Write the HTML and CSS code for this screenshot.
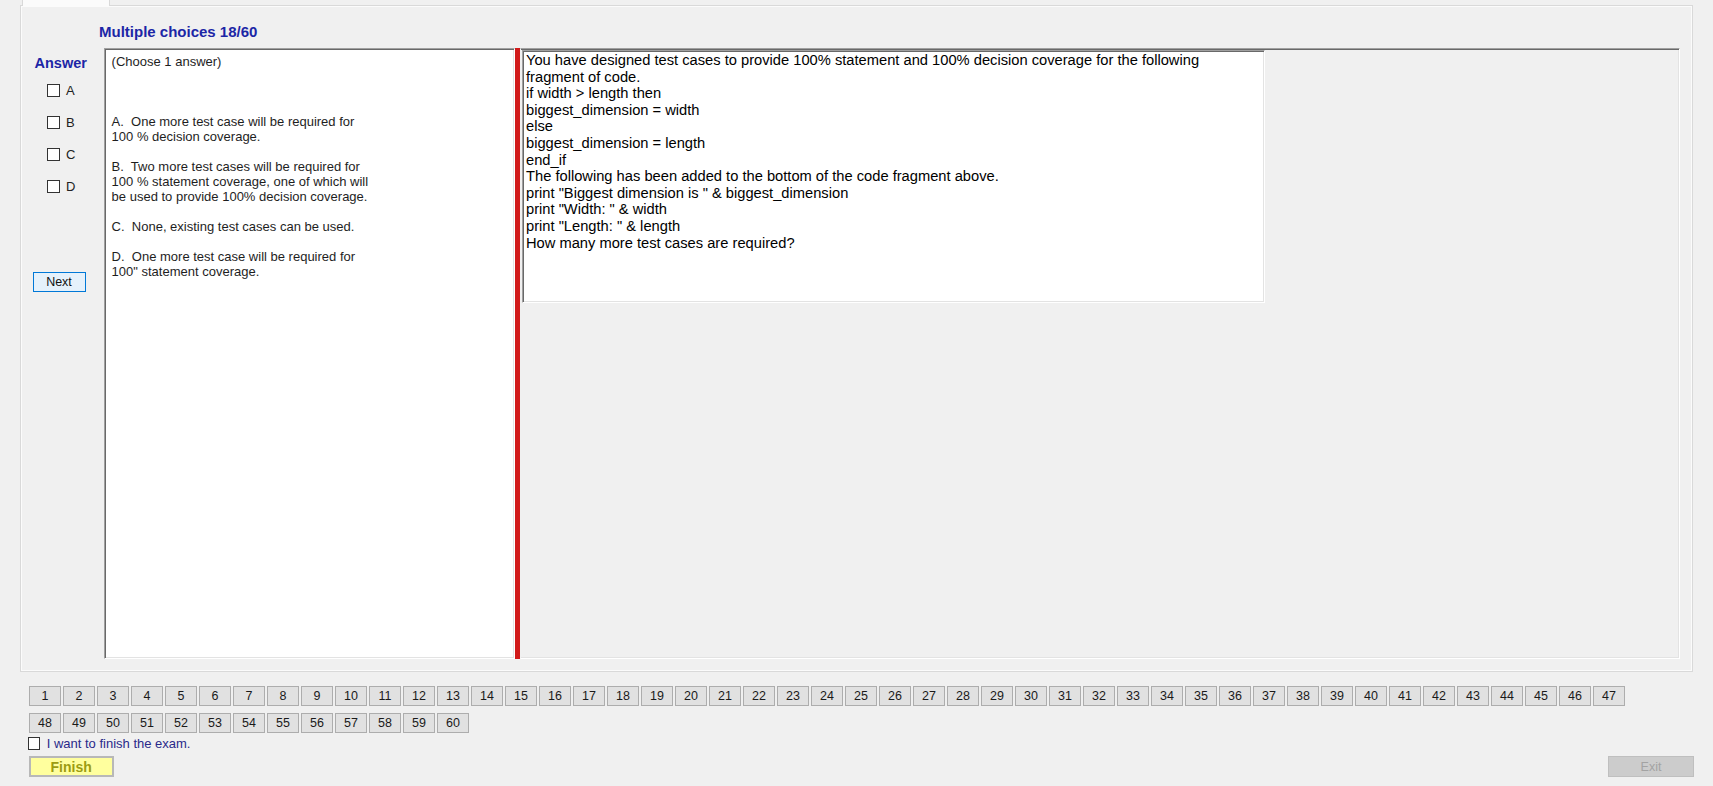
FILE: index.html
```html
<!DOCTYPE html>
<html lang="en">
<head>
<meta charset="utf-8">
<title>Exam</title>
<link rel="stylesheet" href="styles.css">
</head>
<body>
<div class="tabstrip"><div class="tab"></div></div>
<div class="page">
  <div class="title">Multiple choices 18/60</div>
  <div class="main">
    <div class="answers">
      <div class="answer-label">Answer</div>
      <div class="opts">
        <label class="opt"><span class="box"></span>A</label>
        <label class="opt"><span class="box"></span>B</label>
        <label class="opt"><span class="box"></span>C</label>
        <label class="opt"><span class="box"></span>D</label>
      </div>
      <button class="next">Next</button>
    </div>
    <div class="split">
      <div class="pane-left">(Choose 1 answer)



A.  One more test case will be required for
100 % decision coverage.

B.  Two more test cases will be required for
100 % statement coverage, one of which will
be used to provide 100% decision coverage.

C.  None, existing test cases can be used.

D.  One more test case will be required for
100" statement coverage.</div>
      <div class="splitter"></div>
      <div class="pane-right">
        <div class="qbox">You have designed test cases to provide 100% statement and 100% decision coverage for the following
fragment of code.
if width &gt; length then
biggest_dimension = width
else
biggest_dimension = length
end_if
The following has been added to the bottom of the code fragment above.
print "Biggest dimension is " &amp; biggest_dimension
print "Width: " &amp; width
print "Length: " &amp; length
How many more test cases are required?</div>
      </div>
    </div>
  </div>
</div>
<div class="nav">
  <button class="nb">1</button><button class="nb">2</button><button class="nb">3</button><button class="nb">4</button><button class="nb">5</button><button class="nb">6</button><button class="nb">7</button><button class="nb">8</button><button class="nb">9</button><button class="nb">10</button>
  <button class="nb">11</button><button class="nb">12</button><button class="nb">13</button><button class="nb">14</button><button class="nb">15</button><button class="nb">16</button><button class="nb">17</button><button class="nb">18</button><button class="nb">19</button><button class="nb">20</button>
  <button class="nb">21</button><button class="nb">22</button><button class="nb">23</button><button class="nb">24</button><button class="nb">25</button><button class="nb">26</button><button class="nb">27</button><button class="nb">28</button><button class="nb">29</button><button class="nb">30</button>
  <button class="nb">31</button><button class="nb">32</button><button class="nb">33</button><button class="nb">34</button><button class="nb">35</button><button class="nb">36</button><button class="nb">37</button><button class="nb">38</button><button class="nb">39</button><button class="nb">40</button>
  <button class="nb">41</button><button class="nb">42</button><button class="nb">43</button><button class="nb">44</button><button class="nb">45</button><button class="nb">46</button><button class="nb">47</button><button class="nb">48</button><button class="nb">49</button><button class="nb">50</button>
  <button class="nb">51</button><button class="nb">52</button><button class="nb">53</button><button class="nb">54</button><button class="nb">55</button><button class="nb">56</button><button class="nb">57</button><button class="nb">58</button><button class="nb">59</button><button class="nb">60</button>
</div>
<label class="finish-check"><span class="box"></span><span>I want to finish the exam.</span></label>
<div class="actions">
  <button class="finish">Finish</button>
  <button class="exit">Exit</button>
</div>
</body>
</html>
```
FILE: styles.css
```css
html, body {
  margin: 0;
  padding: 0;
}
body {
  width: 1713px;
  height: 786px;
  overflow: hidden;
  background: #f0f0f0;
  font-family: "Liberation Sans", Arial, sans-serif;
  color: #1a1a1a;
}
button {
  font-family: "Liberation Sans", Arial, sans-serif;
  padding: 0;
  margin: 0;
  display: block;
  box-sizing: border-box;
}
.tabstrip {
  height: 5px;
  padding-left: 22px;
}
.tab {
  width: 88px;
  height: 6px;
  box-sizing: border-box;
  background: #fbfbfb;
  border-left: 1px solid #d9d9d9;
  border-right: 1px solid #d9d9d9;
  position: relative;
  z-index: 2;
}
.page {
  margin-left: 20px;
  width: 1673px;
  height: 667px;
  box-sizing: border-box;
  border: 1px solid #d9d9d9;
  box-shadow: inset 0 0 0 1px #fbfbfb;
  padding: 17px 12px 0 0;
}
.title {
  padding-left: 78px;
  font-size: 15px;
  font-weight: bold;
  line-height: 18px;
  color: #1c26a6;
  margin-bottom: 7px;
}
.main {
  display: flex;
  height: 611px;
}
.answers {
  width: 83px;
  flex: none;
}
.answer-label {
  margin: 6px 0 0 13.5px;
  font-size: 14.5px;
  font-weight: bold;
  line-height: 18px;
  color: #1c26a6;
}
.opts {
  margin: 12px 0 0 26px;
  display: flex;
  flex-direction: column;
  gap: 19px;
}
.opt {
  display: flex;
  align-items: center;
  height: 13px;
  font-size: 13px;
  color: #222;
}
.box {
  width: 13px;
  height: 13px;
  box-sizing: border-box;
  border: 1px solid #333;
  background: #fff;
  margin-right: 6px;
  flex: none;
}
.next {
  margin: 79px 0 0 11.5px;
  width: 53px;
  height: 20px;
  background: #e5f1fb;
  border: 1px solid #0078d7;
  font-size: 12.5px;
  color: #111;
}
.split {
  width: 1576px;
  display: flex;
  flex: none;
}
.pane-left {
  width: 411px;
  flex: none;
  box-sizing: border-box;
  background: #fff;
  border: 1px solid;
  border-color: #a0a0a0 #fff #fff #a0a0a0;
  box-shadow: inset 1px 1px 0 #696969, inset -1px -1px 0 #e3e3e3;
  padding: 5px 0 0 6.6px;
  font-size: 13px;
  line-height: 15px;
  white-space: pre;
  color: #1e1e1e;
}
.splitter {
  width: 5px;
  flex: none;
  background: #d11a1a;
}
.pane-right {
  flex: 1;
  box-sizing: border-box;
  border: 1px solid;
  border-color: #a0a0a0 #fff #fff #f0f0f0;
  box-shadow: inset 0 1px 0 #696969, inset -1px -1px 0 #e3e3e3;
  padding: 1px 0 0 1px;
}
.qbox {
  width: 743px;
  height: 253px;
  box-sizing: border-box;
  background: #fff;
  border: 1px solid;
  border-color: #a0a0a0 #fff #fff #a0a0a0;
  box-shadow: inset 1px 1px 0 #696969, inset -1px -1px 0 #e3e3e3;
  padding: 1px 0 0 3px;
  font-size: 14.7px;
  line-height: 16.6px;
  white-space: pre;
  color: #000;
}
.nav {
  margin: 14px 0 0 29px;
  width: 1600px;
  display: flex;
  flex-wrap: wrap;
  gap: 7px 2px;
}
.nb {
  width: 32px;
  height: 20px;
  background: #e1e1e1;
  border: 1px solid #adadad;
  font-size: 12.5px;
  line-height: 18px;
  text-align: center;
  color: #1a1a1a;
}
.finish-check {
  margin: 4px 0 0 27.5px;
  display: flex;
  align-items: center;
  height: 13px;
  font-size: 13px;
  color: #2a2a8a;
}
.finish-check .box {
  width: 12.5px;
  margin-right: 6.7px;
}
.actions {
  margin-top: 6px;
  padding: 0 19px 0 28.7px;
  display: flex;
  justify-content: space-between;
}
.finish {
  width: 85px;
  height: 21px;
  background: #ffff9e;
  border: 2px solid #b8b8b8;
  font-size: 14px;
  font-weight: bold;
  color: #9c9c12;
}
.exit {
  width: 86px;
  height: 21px;
  background: #cccccc;
  border: 1px solid #bfbfbf;
  font-size: 12.5px;
  color: #a3a3a3;
}
```
